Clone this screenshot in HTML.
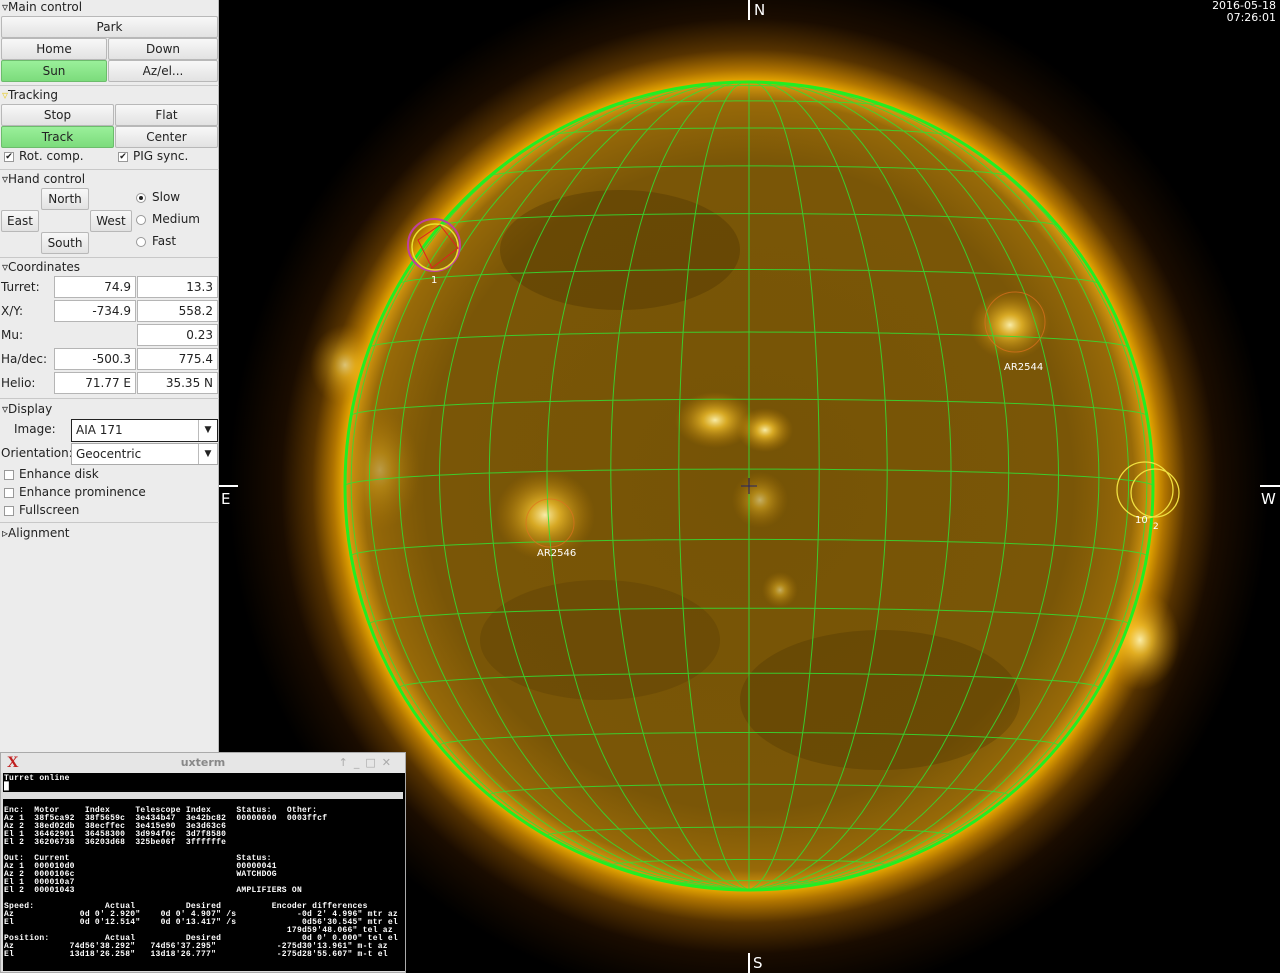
<!DOCTYPE html>
<html><head><meta charset="utf-8">
<style>
*{box-sizing:border-box}
body{margin:0;width:1280px;height:973px;overflow:hidden;background:#000;font-family:"DejaVu Sans","Liberation Sans",sans-serif;font-size:12px;color:#222;position:relative}
#panel{position:absolute;left:0;top:0;width:219px;height:973px;background:#ececec;border-right:1px solid #bbb}
.a{position:absolute}
.btn{position:absolute;background:linear-gradient(#f8f8f8,#e2e2e2);border:1px solid #b8b8b8;border-radius:2px;text-align:center;line-height:20px;font-size:12px;color:#222}
.g{background:linear-gradient(#9af09a,#7cdc7c);border-color:#6cbc6c}
.hd{position:absolute;left:2px;font-size:12px}
.sep{position:absolute;left:0;width:219px;height:1px;background:#c8c8c8}
.ent{position:absolute;background:#fff;border:1px solid #b5b5b5;text-align:right;padding-right:4px;line-height:20px;font-size:12px}
.lbl{position:absolute;left:1px;font-size:12px}
.cb{position:absolute;width:10px;height:10px;border:1px solid #999;background:#fff;font-size:9px;line-height:8px;text-align:center;font-weight:bold}
.rd{position:absolute;width:10px;height:10px;border:1px solid #999;border-radius:50%;background:#fff}
.combo{position:absolute;background:#fff;border:1px solid #aaa;line-height:20px;padding-left:4px;font-size:12px}
.combo .ar{position:absolute;right:0;top:0;width:19px;height:100%;border-left:1px solid #bbb;text-align:center;font-size:9px}
#term{position:absolute;left:0;top:752px;width:406px;height:221px;background:#ddd;border:1px solid #aaa}
#tt{height:20px;background:#e6e6e6;text-align:center;color:#888;font-weight:bold;font-size:11px;line-height:20px;position:relative}
#tb{position:absolute;left:2px;top:20px;width:402px;height:198px;background:#000;color:#fff;font-family:"Liberation Mono","DejaVu Sans Mono",monospace;font-size:8px;letter-spacing:0.25px;line-height:8px;white-space:pre;padding-left:1px;padding-top:2px;font-weight:bold;overflow:hidden}
.wt{position:absolute;color:#fff;font-family:"DejaVu Sans",sans-serif}
</style></head><body>
<svg class="a" style="left:0;top:0" width="1280" height="973" viewBox="0 0 1280 973">
<defs>
<radialGradient id="glow" cx="749" cy="486" r="520" gradientUnits="userSpaceOnUse">
<stop offset="0.775" stop-color="#f0b000"/>
<stop offset="0.80" stop-color="#b07400"/>
<stop offset="0.84" stop-color="#553200"/>
<stop offset="0.9" stop-color="#1a0c00"/>
<stop offset="1" stop-color="#000"/>
</radialGradient>
<radialGradient id="disk" cx="749" cy="486" r="405" gradientUnits="userSpaceOnUse">
<stop offset="0" stop-color="#765406"/>
<stop offset="0.8" stop-color="#7a5607"/>
<stop offset="0.95" stop-color="#986a08"/>
<stop offset="1" stop-color="#e0a010"/>
</radialGradient>
<radialGradient id="br"><stop offset="0" stop-color="#fff4b0" stop-opacity="0.95"/><stop offset="0.3" stop-color="#ffcc30" stop-opacity="0.7"/><stop offset="1" stop-color="#c08000" stop-opacity="0"/></radialGradient>
<clipPath id="dc"><circle cx="749" cy="486" r="404"/></clipPath>
</defs>
<circle cx="749" cy="486" r="520" fill="url(#glow)"/>
<ellipse cx="345" cy="365" rx="35" ry="40" fill="url(#br)" opacity="0.7"/>
<ellipse cx="1140" cy="640" rx="40" ry="50" fill="url(#br)"/>
<circle cx="749" cy="486" r="405" fill="url(#disk)"/>
<g clip-path="url(#dc)">
<ellipse cx="1010" cy="325" rx="40" ry="35" fill="url(#br)"/>
<ellipse cx="545" cy="515" rx="50" ry="45" fill="url(#br)"/>
<ellipse cx="715" cy="420" rx="40" ry="28" fill="url(#br)"/>
<ellipse cx="765" cy="430" rx="28" ry="22" fill="url(#br)"/>
<ellipse cx="760" cy="500" rx="28" ry="28" fill="url(#br)" opacity="0.6"/>
<ellipse cx="780" cy="590" rx="18" ry="18" fill="url(#br)" opacity="0.6"/>
<ellipse cx="380" cy="470" rx="40" ry="60" fill="url(#br)" opacity="0.4"/>
<ellipse cx="620" cy="250" rx="120" ry="60" fill="#4a3204" opacity="0.35"/>
<ellipse cx="880" cy="700" rx="140" ry="70" fill="#4a3204" opacity="0.3"/>
<ellipse cx="600" cy="640" rx="120" ry="60" fill="#4a3204" opacity="0.25"/>
<g id="grid" fill="none" stroke="#33e033" stroke-width="1" opacity="0.85"></g>
</g>
<circle cx="749" cy="486" r="404" fill="none" stroke="#22ee22" stroke-width="3"/>
<circle cx="434" cy="245" r="26" fill="none" stroke="#c040a0" stroke-width="2"/>
<circle cx="435" cy="247" r="23" fill="none" stroke="#e8e030" stroke-width="1.5"/>
<path d="M418 240 L440 225 L458 248 L432 268 Z" fill="none" stroke="#e02020" stroke-width="1"/>
<circle cx="1015" cy="322" r="30" fill="none" stroke="#e07020" stroke-width="1" opacity="0.7"/>
<circle cx="550" cy="523" r="24" fill="none" stroke="#e07020" stroke-width="1" opacity="0.7"/>
<circle cx="1145" cy="490" r="28" fill="none" stroke="#f0e040" stroke-width="1.3"/>
<circle cx="1155" cy="493" r="24" fill="none" stroke="#f0e040" stroke-width="1.3"/>
<path d="M741 486h16M749 478v16" stroke="#222266" stroke-width="1"/>
<path d="M749 0v20M749 953v20M219 486h19M1260 486h20" stroke="#fff" stroke-width="2"/>
</svg>
<div class="wt" style="left:754px;top:1px;font-size:15px">N</div>
<div class="wt" style="left:753px;top:954px;font-size:15px">S</div>
<div class="wt" style="left:221px;top:490px;font-size:15px">E</div>
<div class="wt" style="left:1261px;top:490px;font-size:15px">W</div>
<div class="wt" style="left:1200px;top:0px;font-size:11px;line-height:12px;text-align:right;width:76px">2016-05-18<br>07:26:01</div>
<div class="wt" style="left:431px;top:275px;font-size:10px">1</div>
<div class="wt" style="left:1004px;top:362px;font-size:10px">AR2544</div>
<div class="wt" style="left:537px;top:548px;font-size:10px">AR2546</div>
<div class="wt" style="left:1135px;top:515px;font-size:10px">10</div>
<div class="wt" style="left:1153px;top:522px;font-size:9px">2</div>

<div id="panel">
<div class="hd" style="top:0">▿Main control</div>
<div class="btn" style="left:1px;top:16px;width:217px;height:22px">Park</div>
<div class="btn" style="left:1px;top:38px;width:106px;height:22px">Home</div>
<div class="btn" style="left:108px;top:38px;width:110px;height:22px">Down</div>
<div class="btn g" style="left:1px;top:60px;width:106px;height:22px">Sun</div>
<div class="btn" style="left:108px;top:60px;width:110px;height:22px">Az/el...</div>
<div class="sep" style="top:85px"></div>
<div class="hd" style="top:88px"><span style="color:#e8d040">▿</span>Tracking</div>
<div class="btn" style="left:1px;top:104px;width:113px;height:22px">Stop</div>
<div class="btn" style="left:115px;top:104px;width:103px;height:22px">Flat</div>
<div class="btn g" style="left:1px;top:126px;width:113px;height:22px">Track</div>
<div class="btn" style="left:115px;top:126px;width:103px;height:22px">Center</div>
<div class="cb" style="left:4px;top:152px">✔</div><div class="a" style="left:19px;top:149px">Rot. comp.</div>
<div class="cb" style="left:118px;top:152px">✔</div><div class="a" style="left:133px;top:149px">PIG sync.</div>
<div class="sep" style="top:169px"></div>
<div class="hd" style="top:172px">▿Hand control</div>
<div class="btn" style="left:41px;top:188px;width:48px;height:22px">North</div>
<div class="btn" style="left:1px;top:210px;width:38px;height:22px">East</div>
<div class="btn" style="left:90px;top:210px;width:42px;height:22px">West</div>
<div class="btn" style="left:41px;top:232px;width:48px;height:22px">South</div>
<div class="rd" style="left:136px;top:193px"><div style="width:4px;height:4px;background:#222;border-radius:50%;margin:2px"></div></div><div class="a" style="left:152px;top:190px">Slow</div>
<div class="rd" style="left:136px;top:215px"></div><div class="a" style="left:152px;top:212px">Medium</div>
<div class="rd" style="left:136px;top:237px"></div><div class="a" style="left:152px;top:234px">Fast</div>
<div class="sep" style="top:257px"></div>
<div class="hd" style="top:260px">▿Coordinates</div>
<div class="lbl" style="top:280px">Turret:</div><div class="ent" style="left:54px;top:276px;width:82px;height:22px">74.9</div><div class="ent" style="left:137px;top:276px;width:81px;height:22px">13.3</div>
<div class="lbl" style="top:304px">X/Y:</div><div class="ent" style="left:54px;top:300px;width:82px;height:22px">-734.9</div><div class="ent" style="left:137px;top:300px;width:81px;height:22px">558.2</div>
<div class="lbl" style="top:328px">Mu:</div><div class="ent" style="left:137px;top:324px;width:81px;height:22px">0.23</div>
<div class="lbl" style="top:352px">Ha/dec:</div><div class="ent" style="left:54px;top:348px;width:82px;height:22px">-500.3</div><div class="ent" style="left:137px;top:348px;width:81px;height:22px">775.4</div>
<div class="lbl" style="top:376px">Helio:</div><div class="ent" style="left:54px;top:372px;width:82px;height:22px">71.77 E</div><div class="ent" style="left:137px;top:372px;width:81px;height:22px">35.35 N</div>
<div class="sep" style="top:398px"></div>
<div class="hd" style="top:402px">▿Display</div>
<div class="a" style="left:14px;top:422px">Image:</div>
<div class="combo" style="left:71px;top:419px;width:147px;height:23px;border:1px solid #222">AIA 171<div class="ar">▼</div></div>
<div class="a" style="left:1px;top:446px">Orientation:</div>
<div class="combo" style="left:71px;top:443px;width:147px;height:22px">Geocentric<div class="ar">▼</div></div>
<div class="cb" style="left:4px;top:470px"></div><div class="a" style="left:19px;top:467px">Enhance disk</div>
<div class="cb" style="left:4px;top:488px"></div><div class="a" style="left:19px;top:485px">Enhance prominence</div>
<div class="cb" style="left:4px;top:506px"></div><div class="a" style="left:19px;top:503px">Fullscreen</div>
<div class="sep" style="top:522px"></div>
<div class="hd" style="top:526px">▹Alignment</div>
</div>

<div id="term">
<div id="tt"><span style="position:absolute;left:6px;top:0;color:#c02020;font-size:16px;font-family:'Liberation Serif',serif">X</span>uxterm<span style="position:absolute;right:8px;top:0;color:#aaa;font-weight:normal;letter-spacing:6px">↑_□✕</span></div>
<div id="tb">Turret online
█
<span style="display:block;background:#ddd;height:7px;margin:1px 0 0 -1px;width:400px"></span>
Enc:  Motor     Index     Telescope Index     Status:   Other:
Az 1  38f5ca92  38f5659c  3e434b47  3e42bc82  00000000  0003ffcf
Az 2  38ed02db  38ecffec  3e415e90  3e3d63c6
El 1  36462901  36458300  3d994f0c  3d7f8580
El 2  36206738  36203d68  325be06f  3ffffffe

Out:  Current                                 Status:
Az 1  000010d0                                00000041
Az 2  0000106c                                WATCHDOG
El 1  000010a7
El 2  00001043                                AMPLIFIERS ON

Speed:              Actual          Desired          Encoder differences
Az             0d 0' 2.920"    0d 0' 4.907" /s            -0d 2' 4.996" mtr az
El             0d 0'12.514"    0d 0'13.417" /s             0d56'30.545" mtr el
                                                        179d59'48.066" tel az
Position:           Actual          Desired                0d 0' 0.000" tel el
Az           74d56'38.292"   74d56'37.295"            -275d30'13.961" m-t az
El           13d18'26.258"   13d18'26.777"            -275d28'55.607" m-t el</div>
</div>

<script>
(function(){
var cx=749,cy=486,R=404,B=2.4*Math.PI/180,g=document.getElementById('grid'),ns='http://www.w3.org/2000/svg';
function proj(lat,lon){var x=R*Math.cos(lat)*Math.sin(lon);var y=R*(Math.sin(lat)*Math.cos(B)+Math.cos(lat)*Math.cos(lon)*Math.sin(B));var z=Math.cos(lat)*Math.cos(lon)*Math.cos(B)-Math.sin(lat)*Math.sin(B);return [cx+x,cy-y,z];}
function line(pts){var d='',on=false;pts.forEach(function(p){if(p[2]>=0){d+=(on?'L':'M')+p[0].toFixed(1)+' '+p[1].toFixed(1);on=true;}else on=false;});if(!d)return;var e=document.createElementNS(ns,'path');e.setAttribute('d',d);g.appendChild(e);}
var r=Math.PI/180;
for(var lon=-90;lon<=90;lon+=10){var p=[];for(var la=-90;la<=90;la+=2)p.push(proj(la*r,lon*r));line(p);}
for(var lat=-80;lat<=80;lat+=10){var p=[];for(var lo=-100;lo<=100;lo+=2)p.push(proj(lat*r,lo*r));line(p);}
})();
</script>
</body></html>
